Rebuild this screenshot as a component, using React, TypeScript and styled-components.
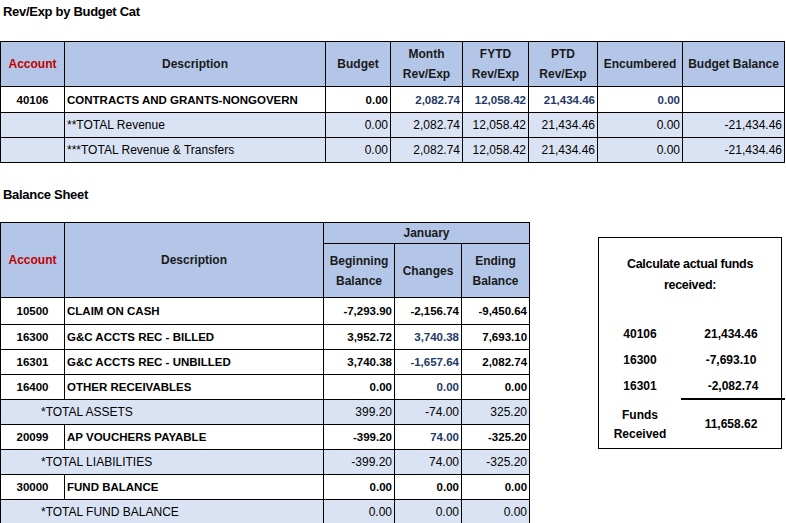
import React from "react";
import styled, { createGlobalStyle } from "styled-components";

const Global = createGlobalStyle`
  body { margin: 0; background: #fff; font-family: "Liberation Sans", Arial, sans-serif; font-size: 12px; color: #000; }
`;

const Page = styled.div`
  width: 786px; height: 523px; position: relative; overflow: hidden;
`;
const Title = styled.div<{ $top: number }>`
  font-weight: 700; font-size: 13px; padding: ${p => p.$top}px 0 0 3px; height: 16px; letter-spacing: -0.3px;
`;
const Table = styled.table<{ $w: number; $mt: number }>`
  border-collapse: collapse; width: ${p => p.$w}px; table-layout: fixed; margin-top: ${p => p.$mt}px;
  td, th { border: 1px solid #000; padding: 0 2px; white-space: nowrap; overflow: hidden; }
`;
const Th = styled.th<{ $red?: boolean; $h?: number }>`
  background: #b4c6e7; font-weight: 700; color: ${p => (p.$red ? "#c00000" : "#1a1a1a")};
  height: ${p => p.$h ?? 44}px; text-align: center; line-height: 20px; font-size: 12px;
`;
const Td = styled.td<{ $align?: string; $bold?: boolean; $total?: boolean; $blue?: boolean; $pl?: number; $h?: number }>`
  height: ${p => p.$h ?? 24}px; text-align: ${p => p.$align ?? "right"};
  font-weight: ${p => (p.$bold ? 700 : 400)};
  background: ${p => (p.$total ? "#dae3f3" : "#fff")};
  color: ${p => (p.$blue ? "#1f3864" : "#000")};
  padding-left: ${p => p.$pl ?? 2}px !important;
  font-size: ${p => (p.$bold ? 11.5 : 12)}px;
`;
const Lower = styled.div`
  display: flex; align-items: flex-start; margin-top: 10px;
`;
const Box = styled.div`
  margin: 64px 0 0 68px; width: 184px; height: 212px; border: 1px solid #000; box-sizing: border-box;
  font-weight: 700; font-size: 12px; padding-top: 16px;
`;
const BoxTitle = styled.div`text-align: center; line-height: 21px; font-size: 12.5px; letter-spacing: -0.3px;`;
const BoxRows = styled.div`margin-top: 26px; display: grid; grid-template-columns: 82px 100px;`;
const BoxCell = styled.div<{ $line?: boolean }>`
  height: 24px; line-height: 24px; text-align: center;
  border-bottom: ${p => (p.$line ? "2px solid #000" : "2px solid transparent")};
  margin-right: ${p => (p.$line ? -4 : 0)}px;
`;
const Funds = styled.div`grid-column: 1; text-align: center; line-height: 19px; margin-top: 6px;`;
const FundsVal = styled.div`text-align: center; line-height: 20px; margin-top: 14px;`;

const top = [
  ["40106", "CONTRACTS AND GRANTS-NONGOVERN", "0.00", "2,082.74", "12,058.42", "21,434.46", "0.00", ""],
  ["", "**TOTAL Revenue", "0.00", "2,082.74", "12,058.42", "21,434.46", "0.00", "-21,434.46"],
  ["", "***TOTAL Revenue & Transfers", "0.00", "2,082.74", "12,058.42", "21,434.46", "0.00", "-21,434.46"],
];

type Row = { acct?: string; desc: string; v: string[]; total?: boolean; blue?: boolean };
const bs: Row[] = [
  { acct: "10500", desc: "CLAIM ON CASH", v: ["-7,293.90", "-2,156.74", "-9,450.64"] },
  { acct: "16300", desc: "G&C ACCTS REC - BILLED", v: ["3,952.72", "3,740.38", "7,693.10"], blue: true },
  { acct: "16301", desc: "G&C ACCTS REC - UNBILLED", v: ["3,740.38", "-1,657.64", "2,082.74"], blue: true },
  { acct: "16400", desc: "OTHER RECEIVABLES", v: ["0.00", "0.00", "0.00"], blue: true },
  { desc: "*TOTAL ASSETS", v: ["399.20", "-74.00", "325.20"], total: true },
  { acct: "20099", desc: "AP VOUCHERS PAYABLE", v: ["-399.20", "74.00", "-325.20"], blue: true },
  { desc: "*TOTAL LIABILITIES", v: ["-399.20", "74.00", "-325.20"], total: true },
  { acct: "30000", desc: "FUND BALANCE", v: ["0.00", "0.00", "0.00"] },
  { desc: "*TOTAL FUND BALANCE", v: ["0.00", "0.00", "0.00"], total: true },
];

export default function App() {
  const widths = [64, 261, 65, 72, 66, 69, 85, 102];
  return (
    <Page>
      <Global />
      <Title $top={4}>Rev/Exp by Budget Cat</Title>
      <Table $w={784} $mt={21}>
        <colgroup>{widths.map((w, i) => <col key={i} style={{ width: w }} />)}</colgroup>
        <thead>
          <tr>
            <Th $red>Account</Th><Th>Description</Th><Th>Budget</Th>
            <Th>Month<br />Rev/Exp</Th><Th>FYTD<br />Rev/Exp</Th><Th>PTD<br />Rev/Exp</Th>
            <Th>Encumbered</Th><Th>Budget Balance</Th>
          </tr>
        </thead>
        <tbody>
          {top.map((r, i) => (
            <tr key={i}>
              {r.map((c, j) => (
                <Td key={j} $h={i === 0 ? 25 : 24} $bold={i === 0} $total={i > 0}
                  $blue={i === 0 && j >= 3}
                  $align={j === 0 ? "center" : j === 1 ? "left" : "right"}>{c}</Td>
              ))}
            </tr>
          ))}
        </tbody>
      </Table>
      <Lower>
        <div>
          <Title $top={14}>Balance Sheet</Title>
          <Table $w={529} $mt={19}>
            <colgroup>{[64, 259, 71, 67, 68].map((w, i) => <col key={i} style={{ width: w }} />)}</colgroup>
            <thead>
              <tr>
                <Th $red rowSpan={2}>Account</Th><Th rowSpan={2}>Description</Th>
                <Th colSpan={3} $h={20}>January</Th>
              </tr>
              <tr>
                <Th $h={53}>Beginning<br />Balance</Th><Th $h={53}>Changes</Th><Th $h={53}>Ending<br />Balance</Th>
              </tr>
            </thead>
            <tbody>
              {bs.map((r, i) => (
                <tr key={i}>
                  {r.total ? (
                    <Td colSpan={2} $total $align="left" $pl={40}>{r.desc}</Td>
                  ) : (
                    <>
                      <Td $bold $align="center" $h={i === 0 ? 26 : 24}>{r.acct}</Td>
                      <Td $bold $align="left">{r.desc}</Td>
                    </>
                  )}
                  {r.v.map((v, j) => (
                    <Td key={j} $bold={!r.total} $total={r.total} $blue={!r.total && r.blue && j === 1}>{v}</Td>
                  ))}
                </tr>
              ))}
            </tbody>
          </Table>
        </div>
        <Box>
          <BoxTitle>Calculate actual funds<br />received:</BoxTitle>
          <BoxRows>
            <BoxCell>40106</BoxCell><BoxCell>21,434.46</BoxCell>
            <BoxCell>16300</BoxCell><BoxCell>-7,693.10</BoxCell>
            <BoxCell>16301</BoxCell><BoxCell $line>-2,082.74</BoxCell>
            <Funds>Funds<br />Received</Funds><FundsVal>11,658.62</FundsVal>
          </BoxRows>
        </Box>
      </Lower>
    </Page>
  );
}
